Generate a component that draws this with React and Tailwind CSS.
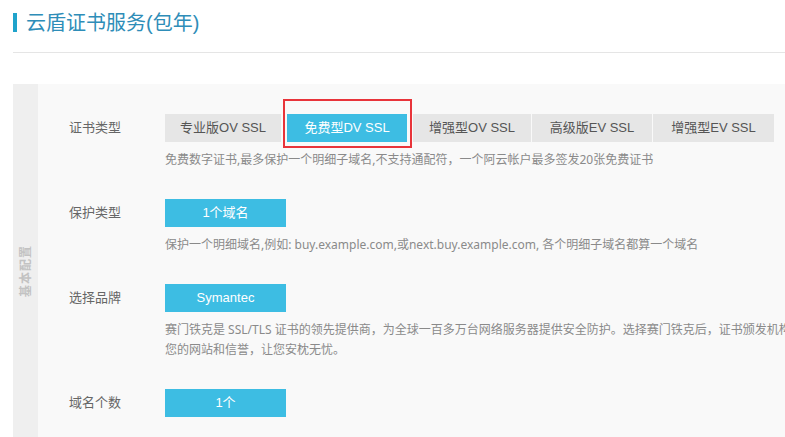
const font = { fontFamily: '"Liberation Sans", "Noto Sans CJK SC", sans-serif' };
const descFont = { fontFamily: '"Noto Sans", "Noto Sans CJK SC", sans-serif' };

const types = [
  { name: "专业版OV SSL", w: "w-[116px]", ml: "" },
  { name: "免费型DV SSL", w: "w-[120px]", ml: "ml-[6px]", active: true },
  { name: "增强型OV SSL", w: "w-[118px]", ml: "ml-[6px]" },
  { name: "高级版EV SSL", w: "w-[120px]", ml: "ml-px" },
  { name: "增强型EV SSL", w: "w-[121px]", ml: "ml-px" },
];

function Row({ label, children, desc }) {
  return (
    <div className="flex mb-[29px]">
      <div className="w-[96px] h-[28px] flex items-center text-[13px] text-[#666]">{label}</div>
      <div>
        {children}
        <div className="mt-2 text-[12px] leading-[20px] text-[#8a8a8a] whitespace-nowrap" style={descFont}>
          {desc}
        </div>
      </div>
    </div>
  );
}

function BlueBtn({ children }) {
  return (
    <div className="w-[121px] h-[28px] flex items-center justify-center bg-[#3dbde3] text-white text-[13px]">
      {children}
    </div>
  );
}

export default function App() {
  return (
    <div className="w-[785px] h-[437px] overflow-hidden bg-white" style={font}>
      <div className="w-[960px] pl-[13px] pt-[13px]">
        <div className="flex items-center h-[19px]">
          <div className="w-[4px] h-[19px] bg-[#1fa3cb]" />
          <h1 className="ml-[9px] text-[20px] leading-none text-[#2e8db8]">云盾证书服务(包年)</h1>
        </div>
        <div className="mt-[20px] h-px bg-[#e5e5e5]" />

        <div className="mt-[31px] flex bg-[#f9f9f9] h-[374px]">
          <div className="w-[25px] bg-[#efefef] flex items-center justify-center">
            <span className="rotate-180 [writing-mode:vertical-rl] [text-orientation:sideways] text-[12px] font-bold text-[#c2c2c2] tracking-[1px]">
              基本配置
            </span>
          </div>
          <div className="pl-[31px] pt-[30px]">
            <Row
              label="证书类型"
              desc="免费数字证书,最多保护一个明细子域名,不支持通配符，一个阿云帐户最多签发20张免费证书"
            >
              <div className="relative flex">
                {types.map((t) => (
                  <div
                    key={t.name}
                    className={`${t.w} ${t.ml} h-[28px] flex items-center justify-center text-[13px] ${
                      t.active ? "bg-[#3dbde3] text-white" : "bg-[#e6e6e6] text-[#555]"
                    }`}
                  >
                    {t.name}
                  </div>
                ))}
                <div className="absolute left-[118px] top-[-15px] w-[129px] h-[49px] border-2 border-[#e8343a]" />
              </div>
            </Row>

            <Row
              label="保护类型"
              desc="保护一个明细域名,例如: buy.example.com,或next.buy.example.com, 各个明细子域名都算一个域名"
            >
              <BlueBtn>1个域名</BlueBtn>
            </Row>

            <Row
              label="选择品牌"
              desc={
                <>
                  赛门铁克是 SSL/TLS 证书的领先提供商，为全球一百多万台网络服务器提供安全防护。选择赛门铁克后，证书颁发机构将为您保护
                  <br />
                  您的网站和信誉，让您安枕无忧。
                </>
              }
            >
              <BlueBtn>Symantec</BlueBtn>
            </Row>

            <Row label="域名个数" desc="">
              <BlueBtn>1个</BlueBtn>
            </Row>
          </div>
        </div>
      </div>
    </div>
  );
}
